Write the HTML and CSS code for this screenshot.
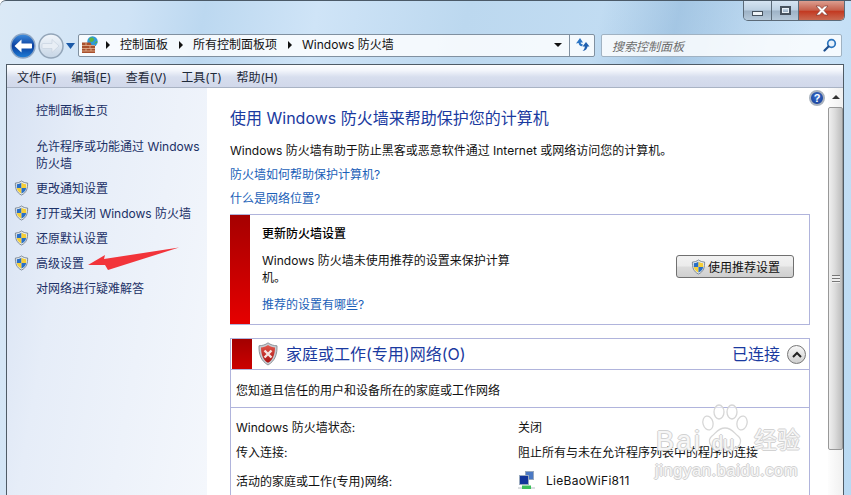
FILE: index.html
```html
<!DOCTYPE html>
<html lang="zh-CN">
<head>
<meta charset="utf-8">
<title>Windows 防火墙</title>
<link rel="stylesheet" href="styles.css">
</head>
<body>
<svg class="defs" width="0" height="0" aria-hidden="true">
  <defs>
    <symbol id="shield" viewBox="0 0 16 16">
      <path d="M8 .5C6 2 4 2.600 1.500 2.700 1.300 8 2.500 13 8 15.500 13.500 13 14.700 8 14.500 2.700 12 2.600 10 2 8 .5z" fill="#e8edf2" stroke="#6d7a86" stroke-width=".9"/>
      <path d="M8 2.400C6.500 3.400 5 3.900 3 4v4h5z" fill="#2a6fc4"/>
      <path d="M8 2.400C9.500 3.400 11 3.900 13 4v4H8z" fill="#f6cf36"/>
      <path d="M3 8h5v5.800C5 12.400 3.400 10.600 3 8z" fill="#f6cf36"/>
      <path d="M13 8H8v5.800C11 12.400 12.600 10.600 13 8z" fill="#2a6fc4"/>
    </symbol>
  </defs>
</svg>
<div class="window">
  <div class="caption">
    <div class="caption-btn min"><span class="min-glyph"></span></div>
    <div class="caption-btn max"><span class="max-glyph"></span></div>
    <div class="caption-btn close"><svg width="16" height="11" viewBox="0 0 16 11"><path d="M2 1h3.500L8 3.600 10.500 1H14l-4 4.500L14 10h-3.500L8 7.400 5.500 10H2l4-4.500z" fill="#fff" stroke="#7d3a30" stroke-width=".7"/></svg></div>
  </div>
  <div class="nav">
    <div class="nav-buttons">
      <svg class="back" width="26" height="26" viewBox="0 0 26 26"><defs><linearGradient id="bk" x1="0" y1="0" x2="0" y2="1"><stop offset="0" stop-color="#3f8fe0"/><stop offset=".5" stop-color="#0b3f9e"/><stop offset="1" stop-color="#1f7fd8"/></linearGradient></defs><circle cx="13" cy="13" r="12" fill="url(#bk)" stroke="#8ea6c4" stroke-width="1.500"/><path d="M4.500 13l7-6.500v4h9.500c.8 0 1 .6 1 1v3c0 .5-.3 1-1 1h-9.500v4z" fill="#fff"/></svg>
      <svg class="forward" width="26" height="26" viewBox="0 0 26 26"><defs><linearGradient id="fw" x1="0" y1="0" x2="0" y2="1"><stop offset="0" stop-color="#f2f6fb"/><stop offset="1" stop-color="#c6d5e5"/></linearGradient></defs><circle cx="13" cy="13" r="12" fill="url(#fw)" stroke="#93a5b8" stroke-width="1.500"/><path d="M21 13l-7-6.500v4H5c-.8 0-1 .6-1 1v3c0 .5.300 1 1 1h9v4z" fill="#e8eef5" stroke="#c3cfdc" stroke-width=".6"/></svg>
      <svg class="drop" width="9" height="6" viewBox="0 0 9 6"><path d="M0 0h9L4.500 6z" fill="#1c5aa8"/></svg>
    </div>
    <div class="address">
      <svg class="addr-icon" width="18" height="17" viewBox="0 0 18 17"><circle cx="10.500" cy="5.500" r="5.200" fill="#2f9ad8"/><path d="M7 3c2-2.500 5-1.500 5 .5s-3 3-4 2zM12 8l2.500-3 1 1.500z" fill="#5fb33f"/><path d="M0 6.500h8.500l1 2.500H13v8H0z" fill="#a8502e"/><path d="M0 9.500h13M0 12.500h13M0 15h13M4 6.500v3M8 9.500v3M4 12.500v2.500M9 12.500v2.500" stroke="#e4b596" stroke-width=".8" fill="none"/></svg>
      <span class="crumb-arrow"></span><span class="crumb">控制面板</span>
      <span class="crumb-arrow"></span><span class="crumb">所有控制面板项</span>
      <span class="crumb-arrow"></span><span class="crumb">Windows 防火墙</span>
      <span class="addr-spacer"></span>
      <span class="addr-drop"></span>
      <span class="addr-refresh"><svg width="15" height="14" viewBox="0 0 15 14"><path d="M5 0L1 5.500l2.600-.5c.2 1.800 1.300 3 3.400 3.300L8 6.500C6.500 6.300 5.700 5.500 5.600 4.500L8 4.500z" fill="#2a74c4"/><path d="M11 4l-3.500 4.500h2.300c0 1.700-.6 3-2.300 4.500 3.200-.5 4.800-2.300 5-4.500H14.500z" fill="#1f5fae"/></svg></span>
    </div>
    <div class="search">
      <span class="search-text">搜索控制面板</span>
      <svg width="14" height="14" viewBox="0 0 14 14"><circle cx="8.500" cy="5.500" r="3.800" fill="#e8f2fb" stroke="#2b74bd" stroke-width="1.700"/><path d="M5.500 8.500L1.500 12.500" stroke="#1c4e8e" stroke-width="2.200" stroke-linecap="round"/></svg>
    </div>
  </div>
  <div class="panel">
    <div class="menu">
      <span>文件(F)</span><span>编辑(E)</span><span>查看(V)</span><span>工具(T)</span><span>帮助(H)</span>
    </div>
    <div class="body">
      <aside class="side">
        <div class="side-home">控制面板主页</div>
        <div class="side-multi">允许程序或功能通过 Windows 防火墙</div>
        <div class="side-list">
          <div class="side-row"><svg class="shield"><use href="#shield"/></svg><span>更改通知设置</span></div>
          <div class="side-row"><svg class="shield"><use href="#shield"/></svg><span>打开或关闭 Windows 防火墙</span></div>
          <div class="side-row"><svg class="shield"><use href="#shield"/></svg><span>还原默认设置</span></div>
          <div class="side-row"><svg class="shield"><use href="#shield"/></svg><span>高级设置</span></div>
          <div class="side-row"><span class="no-icon">对网络进行疑难解答</span></div>
        </div>
      </aside>
      <main class="content">
        <h1 class="title">使用 Windows 防火墙来帮助保护您的计算机</h1>
        <p class="desc">Windows 防火墙有助于防止黑客或恶意软件通过 Internet 或网络访问您的计算机。</p>
        <p class="link line1">防火墙如何帮助保护计算机?</p>
        <p class="link line2">什么是网络位置?</p>
        <section class="alert">
          <div class="redbar"></div>
          <div class="alert-body">
            <h2 class="alert-title">更新防火墙设置</h2>
            <p class="alert-text">Windows 防火墙未使用推荐的设置来保护计算机。</p>
            <p class="link alert-link">推荐的设置有哪些?</p>
          </div>
          <div class="alert-side">
            <button class="rec-btn" type="button"><svg class="shield"><use href="#shield"/></svg>使用推荐设置</button>
          </div>
        </section>
        <section class="net">
          <div class="net-head">
            <div class="redbar small"></div>
            <svg class="bad-shield" width="20" height="24" viewBox="0 0 20 24"><defs><linearGradient id="rs" x1="0" y1="0" x2="0" y2="1"><stop offset="0" stop-color="#e2574c"/><stop offset="1" stop-color="#a81010"/></linearGradient></defs><path d="M10 .8C7.500 2.800 4.500 3.600 1 3.800.6 12 3 19 10 23c7-4 9.400-11 9-19.200C15.500 3.600 12.500 2.800 10 .8z" fill="#c7ccd2" stroke="#7b8288" stroke-width=".8"/><path d="M10 3C8 4.500 5.500 5.200 3 5.400 3 12 5 17.800 10 20.800c5-3 7-8.800 7-15.400C14.500 5.200 12 4.500 10 3z" fill="url(#rs)"/><path d="M6.500 8.500l7 7M13.500 8.500l-7 7" stroke="#f6e4e0" stroke-width="2.400"/></svg>
            <h2 class="net-title">家庭或工作(专用)网络(O)</h2>
            <span class="net-state">已连接</span>
            <span class="chev"><svg width="10" height="7" viewBox="0 0 10 7"><path d="M1 6l4-4 4 4" fill="none" stroke="#222" stroke-width="2"/></svg></span>
          </div>
          <div class="net-desc">您知道且信任的用户和设备所在的家庭或工作网络</div>
          <div class="net-grid">
            <span>Windows 防火墙状态:</span><span>关闭</span>
            <span>传入连接:</span><span>阻止所有与未在允许程序列表中的程序的连接</span>
            <span>活动的家庭或工作(专用)网络:</span>
            <span class="wifi"><svg width="18" height="19" viewBox="0 0 18 19"><rect x="7.500" y=".5" width="8" height="8" fill="#4b79c4" stroke="#98a8bd"/><rect x="1.500" y="4.500" width="9" height="9" fill="#12359a" stroke="#9aaabf"/><path d="M0 17h17" stroke="#b9c0c6"/><path d="M4 14.500h9V18H4z" fill="#3cc05a"/></svg><b>LieBaoWiFi811</b></span>
          </div>
        </section>
      </main>
      <div class="help">?</div>
      <div class="scroll">
        <div class="scroll-up"></div>
        <div class="thumb"><i></i></div>
      </div>
    </div>
  </div>
</div>
<svg class="pointer" width="92" height="24" viewBox="0 0 92 24"><path d="M1 18L18 8l-1 4 75-11.500-71 22.500-3-5z" fill="#f2343a"/></svg>
<div class="mark" aria-hidden="true">
  <svg class="paw" width="50" height="50" viewBox="0 0 50 50"><g fill="rgba(255,255,255,.55)" stroke="#d6d6d6" stroke-width="1.300"><ellipse cx="8" cy="19" rx="5" ry="7" transform="rotate(-15 8 19)"/><ellipse cx="19" cy="8" rx="5" ry="7"/><ellipse cx="32" cy="8" rx="5" ry="7"/><ellipse cx="42" cy="19" rx="5" ry="7" transform="rotate(15 42 19)"/><path d="M25 24c-7 0-9 5-13 8-5 4-2 12 4 12 3 0 6-1 9-1s6 1 9 1c6 0 9-8 4-12-4-3-6-8-13-8z"/></g></svg>
  <span class="mark-bai">Bai</span>
  <span class="mark-du">du</span>
  <span class="mark-jy">经验</span>
  <span class="mark-sub">jingyan.baidu.com</span>
</div>
</body>
</html>
```
FILE: styles.css
```css
* { box-sizing: border-box; }
html, body { margin: 0; padding: 0; }
body {
  width: 851px;
  height: 495px;
  overflow: hidden;
  position: relative;
  font-family: Inter, "Noto Sans CJK SC", "Noto Sans", sans-serif;
  font-size: 12px;
  color: #111;
}
.defs { position: absolute; }
p, h1, h2 { margin: 0; font-weight: normal; }
.window {
  height: 495px;
  display: flex;
  flex-direction: column;
  border-top: 1px solid #4b5a68;
  border-top-left-radius: 6px;
  background:
    linear-gradient(104deg, transparent 0 62%, rgba(120,165,205,.42) 70%, rgba(120,165,205,.15) 78%, transparent 84%),
    linear-gradient(100deg, #dbe9f6 0, #cfe3f6 14%, #bcd8f0 22%, #cfe4f7 34%, #bcd8ef 50%, #c9e2f7 88%, #b9d9f2 100%);
}
.caption {
  height: 20px;
  margin: 0 6px 0 auto;
  width: 102px;
  display: flex;
  border: 1px solid #5b6a78;
  border-top: 0;
  border-radius: 0 0 5px 5px;
  overflow: hidden;
  flex: none;
}
.caption-btn { display: flex; align-items: center; justify-content: center; }
.min, .max {
  width: 28px;
  border-right: 1px solid #5b6a78;
  background: linear-gradient(#d5e4f2 0, #bcd0e2 48%, #9db2c6 52%, #b6c9da 100%);
}
.max { width: 27px; }
.close { flex: 1; background: linear-gradient(#dc9e90 0, #c6604c 48%, #c33a22 55%, #c96a52 100%); }
.min-glyph { width: 11px; height: 5px; margin-top: 6px; background: #eef3f7; border: 1px solid #46525e; }
.max-glyph { width: 11px; height: 9px; background: transparent; border: 2px solid #46525e; outline: 1px solid #e8f0f6; outline-offset: -3px; }
.nav {
  height: 43px;
  flex: none;
  display: flex;
  align-items: center;
  padding: 6px 9px 0 10px;
}
.nav-buttons { display: flex; align-items: center; width: 68px; flex: none; }
.back { flex: none; }
.forward { flex: none; margin-left: 2px; }
.drop { flex: none; margin-left: 2px; margin-top: 1px; }
.address {
  width: 517px;
  flex: none;
  height: 23px;
  display: flex;
  align-items: center;
  border: 1px solid #8090a0;
  border-radius: 2px;
  background: rgba(255,255,255,.82);
  padding: 0 0 1px 3px;
}
.addr-icon { flex: none; margin-right: 6px; margin-bottom: 1px; }
.crumb-arrow {
  width: 0; height: 0;
  border-left: 4px solid #111;
  border-top: 4px solid transparent;
  border-bottom: 4px solid transparent;
  margin-right: 10px;
  flex: none;
}
.crumb { margin-right: 11px; color: #111; white-space: nowrap; line-height: 20px; }
.addr-spacer { flex: 1; }
.addr-drop {
  width: 0; height: 0;
  border-top: 4px solid #111;
  border-left: 4px solid transparent;
  border-right: 4px solid transparent;
  margin-right: 7px;
}
.addr-refresh {
  width: 25px;
  height: 21px;
  border-left: 1px solid #8090a0;
  display: flex;
  align-items: center;
  justify-content: center;
}
.search {
  width: 241px;
  flex: none;
  height: 23px;
  margin-left: 6px;
  display: flex;
  align-items: center;
  justify-content: space-between;
  border: 1px solid #a0b2c2;
  border-radius: 2px;
  background: rgba(255,255,255,.82);
  padding: 0 4px 1px 10px;
}
.search-text { color: #6d6d6d; font-style: italic; }
.panel {
  margin: 0 7px 0 6px;
  flex: 1;
  min-height: 0;
  border: 1px solid #4f5b66;
  border-bottom: 0;
  display: flex;
  flex-direction: column;
  background: #fff;
  overflow: hidden;
}
.menu {
  height: 23px;
  flex: none;
  display: flex;
  align-items: center;
  gap: 14.500px;
  padding-left: 10px;
  color: #1e2a3a;
  background: linear-gradient(#fdfeff 0, #f2f5fb 25%, #d7deee 55%, #d1d8ea 100%);
  border-bottom: 1px solid #a9b3c4;
}
.body { flex: 1; min-height: 0; display: flex; position: relative; }
.side {
  width: 200px;
  flex: none;
  padding: 14px 0 0 0;
  color: #1b3066;
  background: linear-gradient(100deg, #d7e2f3 0, #e6edf8 30%, #f4f7fc 100%);
}
.side-home { padding-left: 29px; line-height: 18px; }
.side-multi { padding: 18px 0 0 29px; line-height: 17px; width: 200px; }
.side-list { margin-top: 3px; }
.side-row { height: 25px; display: flex; align-items: center; padding-left: 7px; }
.shield { width: 15px; height: 16px; flex: none; margin-right: 7px; }
.no-icon { margin-left: 22px; }
.content { width: 621px; flex: none; padding: 0 0 0 23px; position: relative; }
.title { font-size: 16px; color: #1a3aa0; line-height: 22px; margin-top: 19px; }
.desc { margin-top: 13px; line-height: 18px; }
.link { color: #1a5fb8; }
.line1 { margin-top: 6px; line-height: 18px; }
.line2 { margin-top: 6px; line-height: 18px; }
.alert {
  margin-top: 6px;
  width: 580px;
  height: 111px;
  display: flex;
  border: 1px solid #b0b4dc;
  border-left: 0;
}
.redbar { width: 20px; flex: none; background: linear-gradient(#a50000, #e60000); }
.redbar.small { height: 100%; width: 20px; margin-left: 1px; background: linear-gradient(#a30000, #cc0000); }
.alert-body { width: 300px; padding: 10px 0 0 12px; flex: none; }
.alert-title { font-size: 12px; font-weight: 500; line-height: 18px; color: #000; }
.alert-text { margin-top: 9px; line-height: 17px; width: 258px; }
.alert-link { margin-top: 10px; line-height: 18px; }
.alert-side { flex: 1; padding: 40px 15px 0 0; display: flex; justify-content: flex-end; align-items: flex-start; }
.rec-btn {
  width: 118px;
  height: 23px;
  display: flex;
  align-items: center;
  padding: 0 0 0 14px;
  border: 1px solid #707070;
  border-radius: 3px;
  background: linear-gradient(#f2f2f2 0, #ebebeb 48%, #dcdcdc 52%, #cfcfcf 100%);
  font: inherit;
  color: #111;
}
.rec-btn .shield { margin-right: 2px; }
.net {
  margin-top: 13px;
  width: 580px;
  height: 170px;
  border: 1px solid #b0b4dc;
  border-bottom: 0;
  display: flex;
  flex-direction: column;
}
.net-head {
  height: 31px;
  flex: none;
  display: flex;
  align-items: center;
  border-bottom: 1px solid #b0b4dc;
}
.bad-shield { margin-left: 6px; flex: none; }
.net-title { font-size: 16px; color: #1a3aa0; margin: 0 0 0 8px; line-height: 20px; }
.net-state { font-size: 16px; color: #1a3aa0; margin: 0 0 0 auto; line-height: 20px; }
.chev {
  width: 19px; height: 19px;
  border-radius: 50%;
  margin: 0 3px 0 7px;
  display: flex;
  align-items: center;
  justify-content: center;
  border: 1px solid #777;
  background: linear-gradient(#f8f8f8, #cfcfcf);
}
.net-desc {
  height: 38px;
  display: flex;
  align-items: center;
  padding: 2px 0 0 5px;
  border-bottom: 1px solid #b0b4dc;
}
.net-grid {
  display: grid;
  grid-template-columns: 282px 1fr;
  grid-template-rows: 25px 24px 34px;
  padding: 6px 0 0 5px;
  align-items: center;
}
.wifi { display: flex; align-items: center; }
.wifi b { font-weight: normal; margin-left: 10px; letter-spacing: .3px; }
.help {
  position: absolute;
  left: 802px;
  top: 2px;
  width: 16px;
  height: 16px;
  border-radius: 50%;
  background: radial-gradient(circle at 50% 40%, #3a73d0, #12348e);
  border: 2px solid #a9b2bd;
  color: #fff;
  font: bold 11px/12px "Liberation Sans", sans-serif;
  text-align: center;
}
.scroll {
  flex: 1;
  background: linear-gradient(90deg, #fdfdfd, #f0f0f0);
  position: relative;
}
.scroll-up {
  width: 0; height: 0;
  margin: 7px auto 0;
  border-bottom: 4px solid #333;
  border-left: 4px solid transparent;
  border-right: 4px solid transparent;
}
.thumb {
  margin-top: 8px;
  height: 343px;
  border: 1px solid #989898;
  border-radius: 2px;
  background: linear-gradient(90deg, #efefef, #dcdcdc 45%, #bdbdbd);
  display: flex;
  align-items: center;
  justify-content: center;
}
.thumb i {
  width: 8px;
  height: 8px;
  background: repeating-linear-gradient(#777 0 1px, #eee 1px 3px);
}
.pointer { position: absolute; left: 87px; top: 247px; }
.mark {
  position: absolute;
  left: 650px;
  top: 403px;
  width: 160px;
  height: 75px;
  color: #f6f6f6;
  text-shadow: -1px 0 #d2d2d2, 1px 0 #d2d2d2, 0 -1px #d2d2d2, 0 1px #d2d2d2;
  font-family: "Liberation Sans", "Noto Sans CJK SC", sans-serif;
}
.paw { position: absolute; left: 50px; top: 1px; }
.mark-bai { position: absolute; left: 6px; top: 23px; font-size: 27px; line-height: 30px; letter-spacing: 2.500px; }
.mark-du { position: absolute; left: 62px; top: 28px; font-size: 20px; line-height: 24px; }
.mark-jy { position: absolute; left: 104px; top: 23px; font-size: 23px; line-height: 28px; }
.mark-sub { position: absolute; left: 5px; top: 57px; font-size: 16.500px; line-height: 20px; letter-spacing: .6px; white-space: nowrap; }
```
